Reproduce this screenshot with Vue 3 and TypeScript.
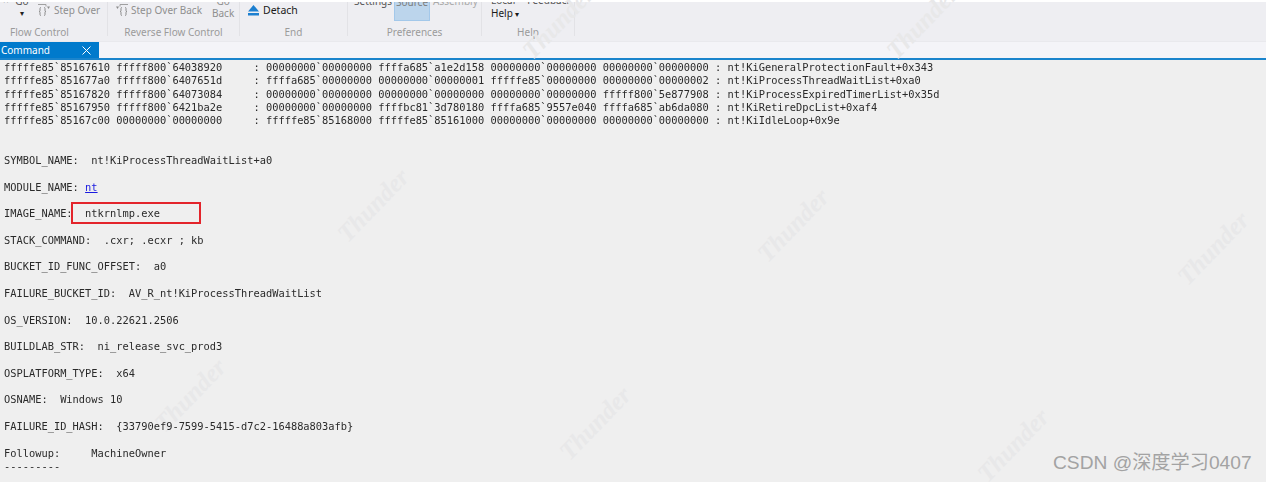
<script setup lang="ts">
const marks: [number, number][] = [
  [373, 205], [793, 225], [595, 423], [1213, 248], [1013, 445], [190, 395], [922, 22], [558, 22],
];
</script>

<template>
  <div class="page">
    <header class="ribbon">
      <section class="group flow">
        <div class="body">
          <span class="clip-x">×</span>
          <div class="col go"><span>Go</span><span class="drop">▾</span></div>
          <div class="row off">
            <svg width="13" height="14" viewBox="0 0 13 14" fill="none" stroke="#8b8b8b" stroke-width="1">
              <path d="M0 1.500h8M8 1.500v2" stroke="#a0a0a0" />
              <path d="M3 4.500c-1 0-1 .5-1 1.500v1.500c0 .8-.4 1-1 1 .6 0 1 .2 1 1v1.500c0 1 0 1.500 1 1.500M6 4.500c1 0 1 .5 1 1.500v1.500c0 .8.4 1 1 1-.6 0-1 .2-1 1v1.500c0 1 0 1.500-1 1.500" />
              <path d="M9 3.500h3L10.500 6z" fill="#8b8b8b" stroke="none" />
            </svg>
            <span>Step Over</span>
          </div>
        </div>
        <div class="label">Flow Control</div>
      </section>

      <section class="group reverse">
        <div class="body">
          <div class="row off">
            <svg width="13" height="14" viewBox="0 0 13 14" fill="none" stroke="#8b8b8b" stroke-width="1">
              <path d="M5 1.500h8M5 1.500v2" stroke="#a0a0a0" />
              <path d="M7 4.500c-1 0-1 .5-1 1.500v1.500c0 .8-.4 1-1 1 .6 0 1 .2 1 1v1.500c0 1 0 1.500 1 1.500M10 4.500c1 0 1 .5 1 1.500v1.500c0 .8.4 1 1 1-.6 0-1 .2-1 1v1.500c0 1 0 1.500-1 1.500" />
              <path d="M1 3.500h3L2.500 6z" fill="#8b8b8b" stroke="none" />
            </svg>
            <span>Step Over Back</span>
          </div>
          <div class="col back off"><span>Go</span><span>Back</span></div>
        </div>
        <div class="label">Reverse Flow Control</div>
      </section>

      <section class="group end">
        <div class="body">
          <div class="row detach">
            <svg width="11" height="12" viewBox="0 0 11 12"><path d="M5.500 1 11 7.500H0z" fill="#1c7fd0" /><path d="M0 9h11v2.500H0z" fill="#1c7fd0" /></svg>
            <span>Detach</span>
          </div>
        </div>
        <div class="label">End</div>
      </section>

      <section class="group prefs">
        <div class="body">
          <span class="clip dark">Settings</span>
          <span class="clip source">Source</span>
          <span class="clip off">Assembly</span>
        </div>
        <div class="label">Preferences</div>
      </section>

      <section class="group help">
        <div class="body">
          <div class="col help-col">
            <span class="top-line"><span>Local</span><span>Feedback</span></span>
            <span class="help-btn">Help <i>▾</i></span>
          </div>
        </div>
        <div class="label">Help</div>
      </section>
    </header>

    <nav class="tabs">
      <div class="tab">
        <span>Command</span>
        <svg width="9" height="9" viewBox="0 0 9 9" stroke="#fff" stroke-width="1"><path d="M.5.500l8 8M8.500.500l-8 8" /></svg>
      </div>
    </nav>

    <pre class="log">fffffe85`85167610 fffff800`64038920     : 00000000`00000000 ffffa685`a1e2d158 00000000`00000000 00000000`00000000 : nt!KiGeneralProtectionFault+0x343
fffffe85`851677a0 fffff800`6407651d     : ffffa685`00000000 00000000`00000001 fffffe85`00000000 00000000`00000002 : nt!KiProcessThreadWaitList+0xa0
fffffe85`85167820 fffff800`64073084     : 00000000`00000000 00000000`00000000 00000000`00000000 fffff800`5e877908 : nt!KiProcessExpiredTimerList+0x35d
fffffe85`85167950 fffff800`6421ba2e     : 00000000`00000000 ffffbc81`3d780180 ffffa685`9557e040 ffffa685`ab6da080 : nt!KiRetireDpcList+0xaf4
fffffe85`85167c00 00000000`00000000     : fffffe85`85168000 fffffe85`85161000 00000000`00000000 00000000`00000000 : nt!KiIdleLoop+0x9e


SYMBOL_NAME:  nt!KiProcessThreadWaitList+a0

MODULE_NAME: <a class="link">nt</a>

IMAGE_NAME:  ntkrnlmp.exe

STACK_COMMAND:  .cxr; .ecxr ; kb

BUCKET_ID_FUNC_OFFSET:  a0

FAILURE_BUCKET_ID:  AV_R_nt!KiProcessThreadWaitList

OS_VERSION:  10.0.22621.2506

BUILDLAB_STR:  ni_release_svc_prod3

OSPLATFORM_TYPE:  x64

OSNAME:  Windows 10

FAILURE_ID_HASH:  {33790ef9-7599-5415-d7c2-16488a803afb}

Followup:     MachineOwner
---------</pre>

    <div class="redbox"></div>
    <span
      v-for="(m, i) in marks"
      :key="i"
      class="mark"
      :style="{ left: m[0] + 'px', top: m[1] + 'px' }"
    >Thunder</span>
    <div class="csdn">CSDN @深度学习0407</div>
  </div>
</template>

<style>
html, body { margin: 0; background: #efefef; }
</style>

<style scoped>
.page {
  position: relative;
  width: 1266px;
  height: 482px;
  overflow: hidden;
  background: #efefef;
  font-family: "Noto Sans", "Noto Sans CJK SC", sans-serif;
}
.ribbon {
  display: flex;
  height: 40px;
  margin-top: 2px;
  background: #eeeef2;
  box-shadow: 0 -2px 0 #fff;
  border-bottom: 1px solid #e9e9ed;
  box-sizing: border-box;
  font-size: 10px;
  color: #1e1e1e;
}
.group {
  display: flex;
  flex-direction: column;
  border-right: 1px solid #e2e2e6;
  height: 34px;
  box-sizing: border-box;
}
.flow { width: 108px; }
.reverse { width: 132px; }
.end { width: 108px; }
.prefs { width: 134px; }
.help { width: 93px; }
.body {
  display: flex;
  height: 23px;
  overflow: hidden;
  align-items: flex-start;
}
.label {
  height: 11px;
  line-height: 14px;
  text-align: center;
  color: #9b9b9b;
  font-size: 10px;
}
.row { display: flex; align-items: center; gap: 3px; margin-top: 1px; line-height: 14px; }
.off { color: #8f8f8f; }
.col { display: flex; flex-direction: column; align-items: center; line-height: 12px; margin-top: -7px; }
.clip-x { margin: -8px 0 0 3px; width: 6px; line-height: 12px; color: #444; }
.go { margin-left: 7px; margin-right: 10px; width: 12px; color: #555; }
.drop { font-size: 8px; line-height: 12px; color: #222; }
.flow .label { padding-right: 28px; }
.reverse .row { margin-left: 7px; }
.back { margin-left: 10px; margin-top: -7px; }
.end .body { padding-left: 8px; }
.detach { gap: 4px; font-size: 10.500px; color: #1a1a1a; }
.prefs .body { padding-left: 6px; gap: 3px; }
.clip { margin-top: -8px; line-height: 14px; height: 14px; }
.dark { color: #555; width: 37px; }
.source {
  width: 36px;
  height: 19px;
  margin-top: 0;
  line-height: 1px;
  padding-top: 0;
  text-align: center;
  background: #bcd5ec;
  border: 1px solid #a3c8ea;
  border-top: 0;
  box-sizing: border-box;
  color: #7d7d7d;
}
.prefs .off { margin-left: 0; color: #a9a9a9; }
.help-col { align-items: flex-start; padding-left: 9px; margin-top: -8px; line-height: 13px; }
.top-line { display: flex; gap: 12px; color: #555; height: 13px; }
.help-btn { color: #1a1a1a; }
.help-btn i { font-style: normal; font-size: 8px; }
.tabs {
  display: flex;
  height: 18px;
  box-sizing: border-box;
  background: #f4f4f8;
  border-bottom: 2px solid #1a84cc;
}
.tab {
  width: 99px;
  height: 16px;
  background: #007acc;
  color: #fff;
  font-size: 10px;
  line-height: 15px;
  padding-left: 1px;
  padding-right: 8px;
  box-sizing: border-box;
  display: flex;
  align-items: center;
  justify-content: space-between;
}
.log {
  position: relative;
  z-index: 1;
  margin: 0;
  padding: 1px 0 0 4px;
  font-family: "DejaVu Sans Mono", "Liberation Mono", monospace;
  font-size: 10.365px;
  line-height: 13.300px;
  color: #2a2a2a;
  white-space: pre;
  filter: blur(0.25px);
}
.link { color: #1a1ae0; text-decoration: underline; }
.redbox {
  position: absolute;
  z-index: 2;
  left: 71px;
  top: 202px;
  width: 130px;
  height: 22px;
  box-sizing: border-box;
  border: 2px solid #e3242b;
}
.mark {
  position: absolute;
  transform: translate(-50%, -50%) rotate(-46deg);
  font-family: "Liberation Serif", serif;
  font-weight: bold;
  font-style: italic;
  font-size: 25px;
  line-height: 25px;
  color: #e8e8e9;
  pointer-events: none;
}
.csdn {
  position: absolute;
  z-index: 2;
  left: 1053px;
  top: 452px;
  font-family: "Liberation Sans", "Noto Sans CJK SC", sans-serif;
  font-size: 19.200px;
  line-height: 22px;
  color: #a3a3a3;
  white-space: nowrap;
}
</style>
